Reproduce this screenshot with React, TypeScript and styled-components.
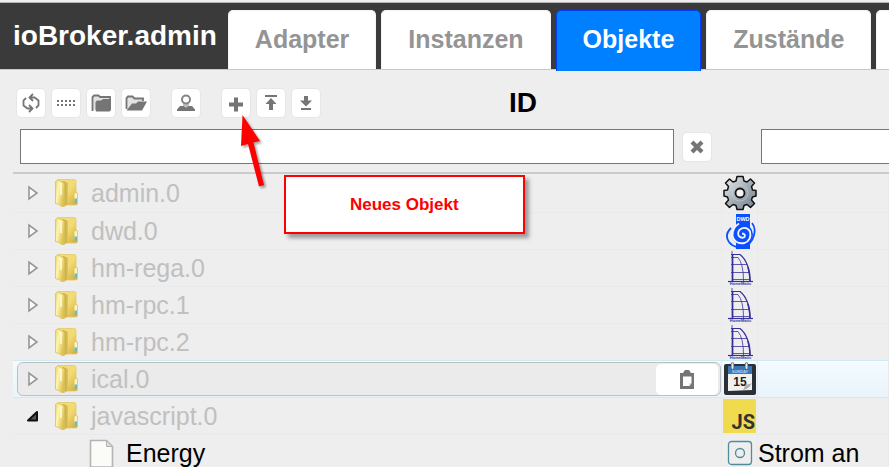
import React from "react";
import styled, { createGlobalStyle, css } from "styled-components";

const GlobalStyle = createGlobalStyle`
  * { box-sizing: border-box; }
  body {
    margin: 0;
    background: #eeeeee;
    font-family: "Liberation Sans", Arial, sans-serif;
  }
  svg { display: block; flex: none; }
`;

const Page = styled.div`
  position: relative;
  height: 100vh;
  overflow: hidden;
  background: #eeeeee;
`;

const Header = styled.header`
  display: flex;
  align-items: flex-end;
  gap: 11px;
  margin-top: 2px;
  padding: 7px 0 0 13px;
  background: #3a3a3a;
  border-top: 1px solid #b4b4b4;
  border-bottom: 1px solid #c8c8c8;
`;

const Brand = styled.h1`
  margin: 0;
  padding-bottom: 17px;
  font-size: 28px;
  line-height: 32px;
  color: #ffffff;
`;

const Tabs = styled.nav`
  display: flex;
  gap: 5px;
`;

const Tab = styled.button<{ $active?: boolean }>`
  flex: none;
  height: ${(p) => (p.$active ? 61 : 59)}px;
  margin: 0 0 ${(p) => (p.$active ? -2 : 0)}px;
  padding: 0 26px ${(p) => (p.$active ? 4 : 2)}px;
  border: 1px solid ${(p) => (p.$active ? "#003eff" : "#f4f4f4")};
  border-bottom: 0;
  border-radius: 5px 5px 0 0;
  background: ${(p) => (p.$active ? "#007fff" : "#ffffff")};
  color: ${(p) => (p.$active ? "#ffffff" : "#949494")};
  font: bold 25px/56px "Liberation Sans", Arial, sans-serif;
`;

const Tree = styled.table`
  width: calc(100% - 13px);
  margin-left: 13px;
  table-layout: fixed;
  border-collapse: separate;
  border-spacing: 0;
`;

const NameCol = styled.col``;
const IconCol = styled.col`
  width: 36px;
`;
const TextCol = styled.col`
  width: 131px;
`;

const HeadCell = styled.th`
  padding: 18px 0 8px;
  border-bottom: 2px solid #cbcbcb;
  vertical-align: bottom;
  font-weight: normal;
`;

const Toolbar = styled.div`
  display: flex;
  gap: 5px;
  height: 30px;
  padding: 0 2px 0 3px;
`;

const ToolButton = styled.button<{ $spaced?: boolean }>`
  display: flex;
  flex: none;
  align-items: center;
  justify-content: center;
  width: 30px;
  height: 30px;
  margin: 0 0 0 ${(p) => (p.$spaced ? 15 : 0)}px;
  padding: 0;
  border: 1px solid #e6e6e6;
  border-radius: 5px;
  background: #ffffff;
`;

const ColumnTitle = styled.div`
  flex: 1;
  font-size: 28px;
  font-weight: bold;
  line-height: 30px;
  text-align: center;
  color: #000000;
`;

const FilterRow = styled.div`
  display: flex;
  align-items: center;
  gap: 8px;
  margin-top: 11px;
  padding: 0 10px 0 7px;
`;

const FilterInput = styled.input`
  flex: 1;
  min-width: 0;
  height: 35px;
  padding: 0 6px;
  border: 1px solid #767676;
  border-radius: 0;
  background: #ffffff;
  font: 25px "Liberation Sans", Arial, sans-serif;
`;

const TextFilter = styled(FilterInput)`
  display: block;
  width: calc(100% + 8px);
  margin-left: 3px;
`;

const Cell = styled.td`
  height: 37px;
  padding: 0;
  border-bottom: 1px solid #eaeaea;
  border-right: 1px solid #eaeaea;
  vertical-align: middle;
`;

const Row = styled.tr<{ $hover?: boolean; $beforeHover?: boolean; $first?: boolean }>`
  ${(p) => p.$first && css`${Cell} { height: 39px; }`}
  ${(p) => (p.$hover || p.$beforeHover) && css`${Cell} { border-bottom-color: #cdebf7; }`}
  ${(p) => p.$hover && css`${Cell} { background: linear-gradient(#f5fbff, #e8f4fa); }`}
`;

const NameBox = styled.div<{ $outlined?: boolean; $level: number }>`
  display: flex;
  align-items: center;
  height: 34px;
  margin-left: 4px;
  padding: 0 2px 0 ${(p) => 9 + p.$level * 62}px;
  border: 1px solid ${(p) => (p.$outlined ? "#bfbfbf" : "transparent")};
  border-radius: 6px;
  background: ${(p) => (p.$outlined ? "#ebebeb" : "transparent")};
`;

const Toggle = styled.button`
  flex: none;
  width: 12px;
  margin: 0 15px 0 0;
  padding: 0;
  border: 0;
  background: none;
`;

const NodeName = styled.span<{ $leaf?: boolean }>`
  flex: 1;
  margin-left: 12px;
  font-size: 25px;
  line-height: 32px;
  color: ${(p) => (p.$leaf ? "#000000" : "#c0c0c0")};
`;

const CopyButton = styled.button`
  display: flex;
  align-items: center;
  justify-content: center;
  width: 62px;
  height: 31px;
  padding: 0;
  border: 0;
  border-radius: 5px;
  background: #ffffff;
`;

const IconBox = styled.div`
  display: flex;
  justify-content: center;
`;

const ValueText = styled.span`
  font-size: 25px;
  line-height: 32px;
  color: #000000;
  white-space: nowrap;
`;

const Callout = styled.div`
  position: absolute;
  left: 284px;
  top: 175px;
  padding: 18px 64px 17px;
  border: 2px solid #ff0000;
  background: #ffffff;
  box-shadow: 4px 4px 4px rgba(0, 0, 0, 0.35);
  font-size: 17px;
  font-weight: bold;
  line-height: 20px;
  color: #ff0000;
`;

const Pointer = styled.svg`
  position: absolute;
  left: 236px;
  top: 112px;
  filter: drop-shadow(2px 2px 1px rgba(0, 0, 0, 0.35));
`;

const G = "#757575";

const RefreshIcon = () => (
  <svg width="20" height="20" viewBox="0 0 20 20" fill="none" stroke={G} strokeWidth="1.800">
    <path d="M12 1L8.500 4.500L12 8M8.500 4.500H13.500L17.500 7.500V12.500L15 15" />
    <path d="M8 12L11.500 15.500L8 19M11.500 15.500H6.500L2.500 12.500V7.500L5 5" />
  </svg>
);

const DotsIcon = () => (
  <svg width="18" height="8" viewBox="0 0 18 8" fill={G}>
    {[0, 4, 8, 12, 16].map((x) => (
      <React.Fragment key={x}>
        <rect x={x} y="1" width="2" height="2" />
        <rect x={x} y="5" width="2" height="2" />
      </React.Fragment>
    ))}
  </svg>
);

const FolderClosedIcon = () => (
  <svg width="20" height="18" viewBox="0 0 20 18">
    <path d="M1.500 17V3L3 1.500H7.500L9 3H19V6" fill="#e2e2e2" stroke={G} strokeWidth="1.800" />
    <path d="M4.500 16V8L6 6.500H10L12 5H20V16L18.500 17.500H5Z" fill={G} />
  </svg>
);

const FolderOpenIcon = () => (
  <svg width="22" height="18" viewBox="0 0 22 18">
    <path d="M1.500 15V4L3 2.500H7.500L9.500 4.500H18V7" fill="#e2e2e2" stroke={G} strokeWidth="1.800" />
    <path d="M1.500 16.500L7 9.500H11L13 7.500H22L17 16.500Z" fill={G} />
  </svg>
);

const PersonIcon = () => (
  <svg width="18" height="20" viewBox="0 0 18 20">
    <path d="M6 10H12V14H6Z" fill="#bdbdbd" />
    <circle cx="9" cy="6.500" r="4" fill="#ffffff" stroke="#858585" strokeWidth="2" />
    <path d="M0 18V16.500L3 13H6L9 14.500L12 13H15L18 16.500V18Z" fill={G} />
  </svg>
);

const PlusIcon = () => (
  <svg width="16" height="20" viewBox="0 0 16 20" fill={G}>
    <path d="M6 4.500H10V9.500H15V13.500H10V18.500H6V13.500H1V9.500H6Z" />
  </svg>
);

const TopIcon = ({ flip }: { flip?: boolean }) => (
  <svg width="14" height="18" viewBox="0 0 14 18" fill={G}>
    {flip ? (
      <path d="M5 2H9V6.500H13L7 12.500L1 6.500H5ZM2 14H12V16H2Z" />
    ) : (
      <path d="M1 1H13V3H1ZM7 4L12.500 10H9V16H5V10H1.500Z" />
    )}
  </svg>
);

const ClearIcon = () => (
  <svg width="14" height="14" viewBox="0 0 14 14" stroke={G} strokeWidth="4.200">
    <path d="M2 2L12 12M12 2L2 12" />
  </svg>
);

const ClipboardIcon = () => (
  <svg width="16" height="20" viewBox="0 0 16 20">
    <path d="M1 4H4L6 1H10L12 4H15V20H1Z" fill={G} />
    <path d="M4 7.500H12.500V14L10.500 17H4Z" fill="#ffffff" />
    <path d="M12.500 14L10.500 14.500V17Z" fill="#cccccc" />
  </svg>
);

const ToggleIcon = ({ open }: { open?: boolean }) => (
  <svg width="12" height="16" viewBox="0 0 12 16">
    {open ? (
      <path d="M10 4V12.500H1Z" fill="#555555" stroke="#111111" strokeWidth="2" strokeLinejoin="round" />
    ) : (
      <path d="M2 2V14L10 8Z" fill="#fafafa" stroke="#969696" strokeWidth="1.600" />
    )}
  </svg>
);

const YellowFolder = () => (
  <svg width="25" height="30" viewBox="0 0 25 30">
    <defs>
      <linearGradient id="folderBack" x2="1" y2="1">
        <stop offset="0" stopColor="#f3dc7c" />
        <stop offset="0.500" stopColor="#f2db72" />
        <stop offset="1" stopColor="#cda93a" />
      </linearGradient>
      <linearGradient id="folderFront" x2="1" y2="0.500">
        <stop offset="0" stopColor="#ead468" />
        <stop offset="0.400" stopColor="#fff5ae" />
        <stop offset="1" stopColor="#dcc050" />
      </linearGradient>
      <linearGradient id="folderSpine" x2="1">
        <stop offset="0" stopColor="#bd9c37" />
        <stop offset="1" stopColor="#e0c560" />
      </linearGradient>
    </defs>
    <path d="M4 1.500H20Q22 1.500 22 3.500V14L23.500 15V26Q23.500 27 21 27H9Z" fill="url(#folderBack)" stroke="#e2ca66" strokeWidth="0.800" />
    <path d="M9 3L14 5V27L9 28Z" fill="url(#folderSpine)" />
    <path d="M1.500 3.500L3.500 2L10.500 5V28.500H7.500L5 26.500L1.500 25.500Z" fill="url(#folderFront)" stroke="#d8c15a" strokeWidth="0.800" />
    <path d="M7 5V17" stroke="#fffce6" strokeWidth="1.500" />
    <rect x="20.500" y="15" width="2.500" height="9" rx="1" fill="#fbf3c2" />
    <rect x="20.500" y="20.500" width="2.500" height="4" fill="#6fb9b3" />
  </svg>
);

const FileIcon = () => (
  <svg width="25" height="29" viewBox="0 0 25 29">
    <path d="M1.500 1.500H17.500L23.500 7.500V28H1.500Z" fill="#fbfcf8" stroke="#b4b4b4" strokeWidth="1.600" />
    <path d="M17.500 1.500V7.500H23.500Z" fill="#dddddd" stroke="#b4b4b4" />
  </svg>
);

const GearIcon = () => (
  <svg width="34" height="36" viewBox="0 0 34 36">
    <defs>
      <linearGradient id="gearFill" x2="1" y2="1">
        <stop offset="0.200" stopColor="#d2d8dd" />
        <stop offset="0.500" stopColor="#a4afb8" />
        <stop offset="1" stopColor="#72808c" />
      </linearGradient>
    </defs>
    <path
      d="M14 1.500H20L21 6L24 7L27.500 4L31.500 8L28.500 11.500L29.500 15L33 15.500V21L29.500 22L28.500 25L31.500 28.500L27.500 32.500L24 29.500L21 30.500L20 34.500H14L13 30.500L10 29.500L6.500 32.500L2.500 28.500L5.500 25L4.500 22L1 21V15.500L4.500 15L5.500 11.500L2.500 8L6.500 4L10 7L13 6Z"
      fill="url(#gearFill)"
      stroke="#111111"
      strokeWidth="1.500"
      strokeLinejoin="round"
    />
    <circle cx="17" cy="18" r="8" fill="none" stroke="#d2d8dd" strokeWidth="1" opacity="0.500" />
    <circle cx="17" cy="18" r="4.500" fill="#f4f4f4" stroke="#111111" strokeWidth="1.800" />
  </svg>
);

const SvgLabel = styled.text`
  font-family: "Liberation Sans", Arial, sans-serif;
  font-weight: bold;
`;

const JsLabel = styled(SvgLabel)`
  font-family: Roboto, "Liberation Sans", sans-serif;
`;

const DwdIcon = () => (
  <svg width="34" height="36" viewBox="0 0 34 36">
    <rect x="13" y="1" width="14" height="35" fill="#0b50ff" />
    <SvgLabel x="20" y="7.500" fontSize="5.500" textAnchor="middle" fill="#ffffff">DWD</SvgLabel>
    <circle cx="19.500" cy="21.500" r="10.500" fill="#0b50ff" />
    <path d="M19 20.500Q23 21 21.500 24Q18 26 15.500 22.500Q14 18 18.500 15.500Q24 13.500 27 18.500Q29 27 21.500 30Q12 31.500 9.500 23Q9 15 16 10.500" fill="none" stroke="#f2f5ff" strokeWidth="1.800" />
    <path d="M8 15Q1 22 6 29Q9 33 14 34M29 10Q33 15 31 22Q30 27 26 31" fill="none" stroke="#0b50ff" strokeWidth="1.800" />
  </svg>
);

const HomeMaticIcon = () => (
  <svg width="34" height="36" viewBox="0 0 34 36" fill="none" stroke="#38309a">
    <path d="M9 5V1" strokeWidth="0.800" />
    <path d="M9.500 5V31" strokeWidth="1.800" />
    <path d="M8 4.500H17Q26.500 12 27 31" strokeWidth="1.200" />
    <path d="M25 17Q27 23 27 31" strokeWidth="1.600" />
    <path d="M8 7.500H15Q20.500 14 20.500 31M8 14.500H24M8 22.500H27M10 29.500H27" strokeWidth="0.800" />
    <path d="M5 31.500H30" strokeWidth="1.200" />
    <SvgLabel x="17.500" y="35" fontSize="4" textAnchor="middle" fill="#38309a" stroke="none">HomeMatic</SvgLabel>
  </svg>
);

const CalendarIcon = () => (
  <svg width="34" height="34" viewBox="0 0 34 34">
    <rect x="1" y="2" width="32" height="31" rx="2" fill="#2b3036" />
    <path d="M5 4H29V28L5 29Z" fill="#f1f1f1" />
    <rect x="5" y="4" width="24" height="8" fill="#3977b9" />
    <SvgLabel x="17" y="11" fontSize="4" textAnchor="middle" fill="#b7d4ee">SUNDAY</SvgLabel>
    <SvgLabel x="17" y="24" fontSize="12" textAnchor="middle" fill="#1d1d1d">15</SvgLabel>
    <path d="M20 28L23 22Q26 23 29 21Q26 27 20 28Z" fill="#aeb1b3" />
    <path d="M9.500 2V6M23.500 2V6" stroke="#555555" strokeWidth="3.500" strokeLinecap="round" />
    <path d="M9.500 2V6M23.500 2V6" stroke="#e9e9e9" strokeWidth="2" strokeLinecap="round" />
  </svg>
);

const JsIcon = () => (
  <svg width="33" height="34" viewBox="0 0 33 34">
    <rect width="33" height="34" fill="#f0db4f" />
    <JsLabel x="32" y="30" fontSize="20" textAnchor="end" fill="#323330">JS</JsLabel>
  </svg>
);

const StateIcon = () => (
  <svg width="26" height="26" viewBox="0 0 26 26" fill="none" stroke="#528b9c" strokeWidth="1.300">
    <rect x="1.500" y="1.500" width="23" height="23" rx="3" />
    <circle cx="13" cy="13" r="4.500" />
  </svg>
);

const tools = [
  { label: "Aktualisieren", icon: <RefreshIcon /> },
  { label: "Liste", icon: <DotsIcon /> },
  { label: "Alle zuklappen", icon: <FolderClosedIcon /> },
  { label: "Alle aufklappen", icon: <FolderOpenIcon /> },
  { label: "Experte", icon: <PersonIcon />, spaced: true },
  { label: "Neues Objekt", icon: <PlusIcon />, spaced: true },
  { label: "Hochladen", icon: <TopIcon /> },
  { label: "Herunterladen", icon: <TopIcon flip /> },
];

type Node = {
  name: string;
  icon: React.ReactNode;
  open?: boolean;
  hover?: boolean;
  leaf?: boolean;
  value?: string;
};

const nodes: Node[] = [
  { name: "admin.0", icon: <GearIcon /> },
  { name: "dwd.0", icon: <DwdIcon /> },
  { name: "hm-rega.0", icon: <HomeMaticIcon /> },
  { name: "hm-rpc.1", icon: <HomeMaticIcon /> },
  { name: "hm-rpc.2", icon: <HomeMaticIcon /> },
  { name: "ical.0", icon: <CalendarIcon />, hover: true },
  { name: "javascript.0", icon: <JsIcon />, open: true },
  { name: "Energy", icon: <StateIcon />, leaf: true, value: "Strom an" },
];

export default function App() {
  return (
    <>
      <GlobalStyle />
      <Page>
        <Header>
          <Brand>ioBroker.admin</Brand>
          <Tabs>
            <Tab>Adapter</Tab>
            <Tab>Instanzen</Tab>
            <Tab $active aria-current="page">Objekte</Tab>
            <Tab>Zustände</Tab>
            <Tab aria-label="Weitere" />
          </Tabs>
        </Header>
        <main>
          <Tree>
            <colgroup>
              <NameCol />
              <IconCol />
              <TextCol />
            </colgroup>
            <thead>
              <tr>
                <HeadCell>
                  <Toolbar>
                    {tools.map((t) => (
                      <ToolButton key={t.label} aria-label={t.label} $spaced={t.spaced}>
                        {t.icon}
                      </ToolButton>
                    ))}
                    <ColumnTitle>ID</ColumnTitle>
                  </Toolbar>
                  <FilterRow>
                    <FilterInput aria-label="ID" />
                    <ToolButton aria-label="Filter löschen">
                      <ClearIcon />
                    </ToolButton>
                  </FilterRow>
                </HeadCell>
                <HeadCell />
                <HeadCell>
                  <TextFilter aria-label="Name" />
                </HeadCell>
              </tr>
            </thead>
            <tbody>
              {nodes.map((n, i) => (
                <Row key={n.name} $first={i === 0} $hover={n.hover} $beforeHover={nodes[i + 1]?.hover}>
                  <Cell>
                    <NameBox $outlined={n.hover} $level={n.leaf ? 1 : 0}>
                      {!n.leaf && (
                        <Toggle aria-label={n.name} aria-expanded={!!n.open}>
                          <ToggleIcon open={n.open} />
                        </Toggle>
                      )}
                      {n.leaf ? <FileIcon /> : <YellowFolder />}
                      <NodeName $leaf={n.leaf}>{n.name}</NodeName>
                      {n.hover && (
                        <CopyButton aria-label="Kopieren">
                          <ClipboardIcon />
                        </CopyButton>
                      )}
                    </NameBox>
                  </Cell>
                  <Cell>
                    <IconBox>{n.icon}</IconBox>
                  </Cell>
                  <Cell>{n.value && <ValueText>{n.value}</ValueText>}</Cell>
                </Row>
              ))}
            </tbody>
          </Tree>
        </main>
        <Callout>Neues Objekt</Callout>
        <Pointer width="34" height="80" viewBox="0 0 34 80">
          <path d="M6.500 3L24 29L17.500 30.500L28 73L23 74.500L12 32L5 34Z" fill="#ff0000" />
        </Pointer>
      </Page>
    </>
  );
}
